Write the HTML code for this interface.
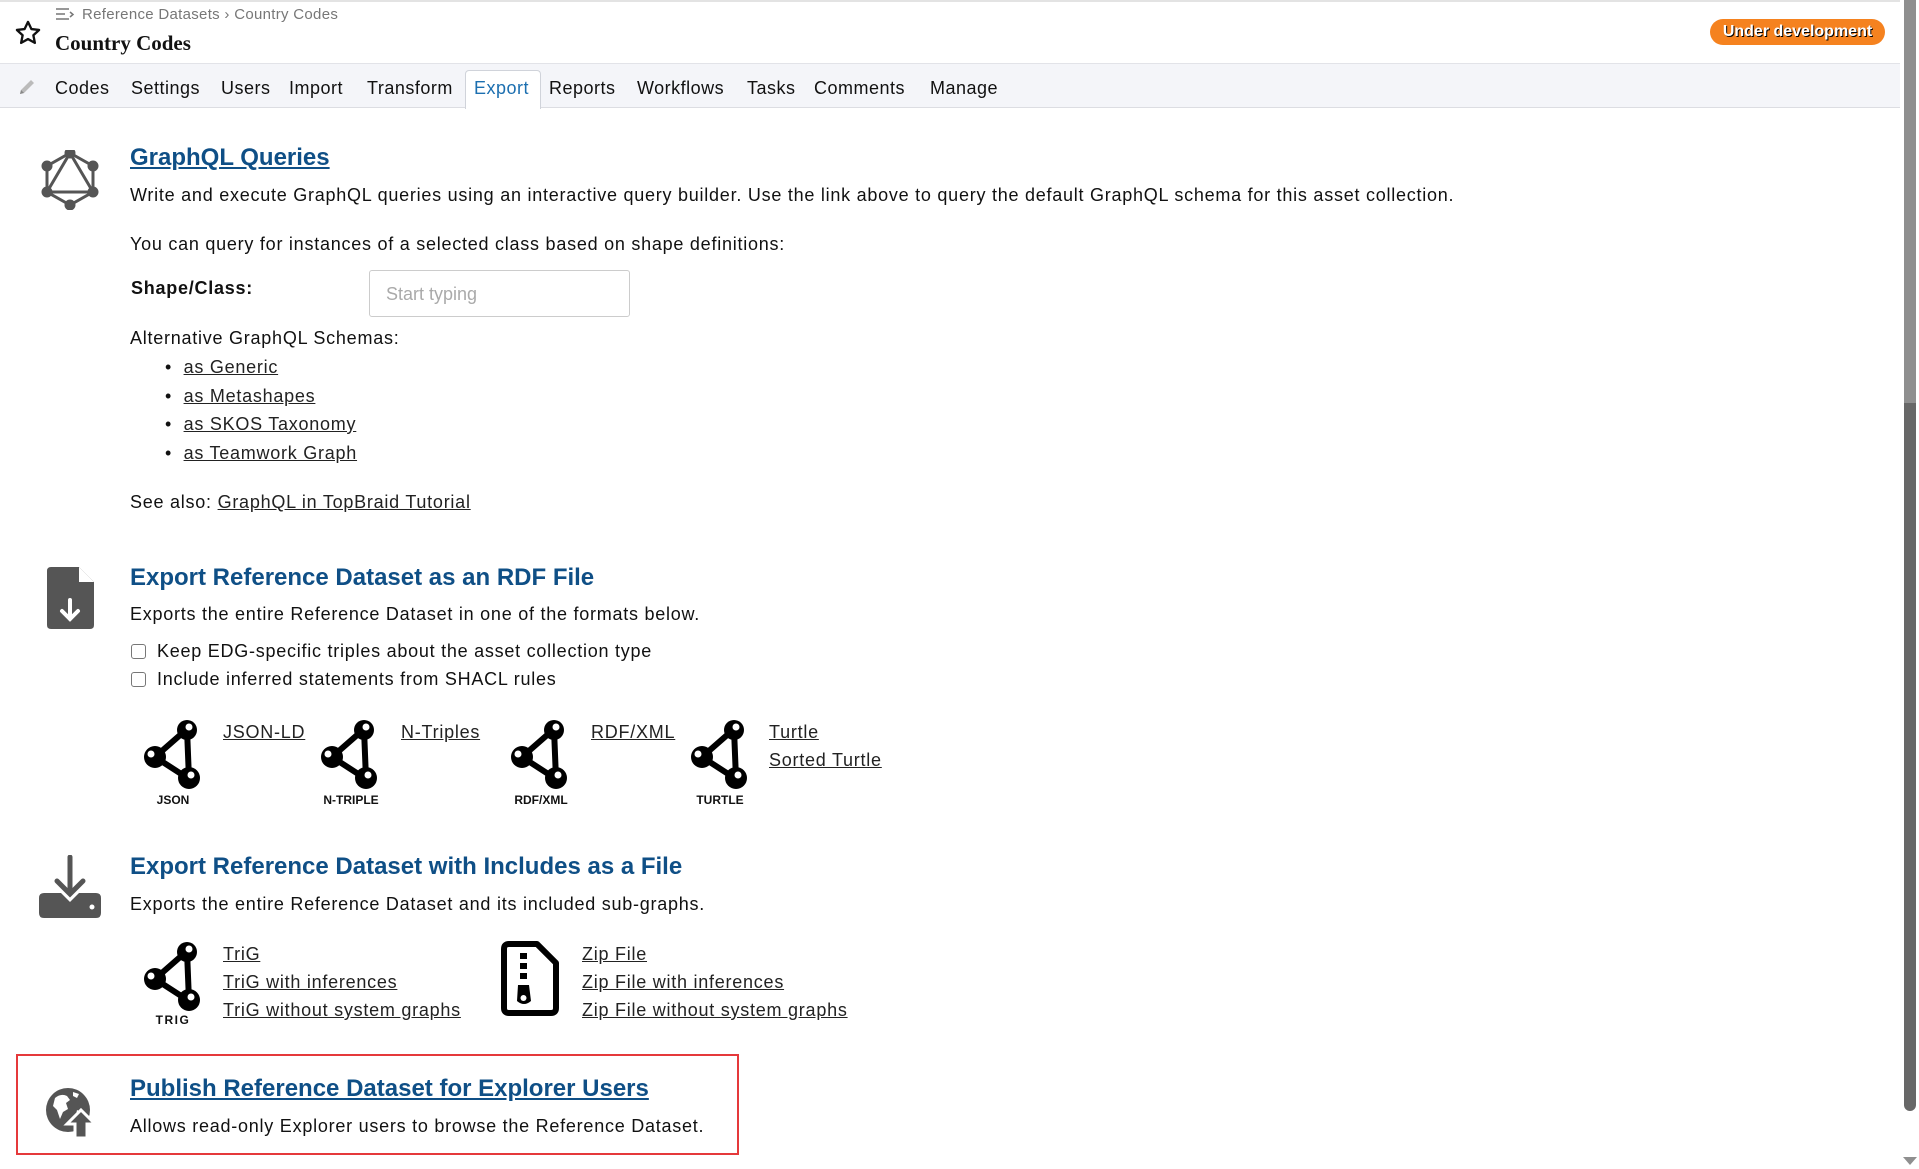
<!DOCTYPE html>
<html><head><meta charset="utf-8">
<style>
*{margin:0;padding:0;box-sizing:border-box}
body{width:1919px;height:1169px;overflow:hidden;background:#fff;font-family:"Liberation Sans",sans-serif;color:#111;position:relative}
.a{position:absolute;white-space:nowrap}
a{color:#222;text-decoration:underline}
.t{font-size:18px;line-height:22px;letter-spacing:0.75px}
.h{font-size:24px;font-weight:bold;color:#0f4f86;line-height:28px}
.tab{position:absolute;top:77px;font-size:18px;line-height:22px;color:#111;letter-spacing:0.5px}
.lbl{font-size:12px;font-weight:bold;text-align:center;width:60px}
</style></head><body>
<div class="a" style="left:0;top:0;width:1900px;height:2px;background:#e3e3e3"></div>
<svg class="a" style="left:14px;top:19px" width="28" height="28" viewBox="0 0 24 24"><path d="M12 2.5l2.9 6.1 6.6.8-4.9 4.5 1.3 6.6L12 17.2l-5.9 3.3 1.3-6.6L2.5 9.4l6.6-.8z" fill="none" stroke="#111" stroke-width="2" stroke-linejoin="round"/></svg>
<svg class="a" style="left:55px;top:7px" width="20" height="16" viewBox="0 0 20 16"><path d="M1 2h13M1 7h9M1 12h13M15 5l3 2.5-3 2.5" fill="none" stroke="#777" stroke-width="1.5"/></svg>
<div class="a" style="left:82px;top:6px;font-size:15px;color:#777;letter-spacing:0.3px">Reference Datasets › Country Codes</div>
<div class="a" style="left:55px;top:31px;font-family:'Liberation Serif',serif;font-weight:bold;font-size:21px;color:#111">Country Codes</div>
<div class="a" style="left:1710px;top:19px;width:175px;height:26px;border-radius:13px;background:#f5821f;color:#fff;font-weight:bold;font-size:16px;line-height:26px;text-align:center;text-shadow:1px 1px 0 #000">Under development</div>
<div class="a" style="left:0;top:63px;width:1900px;height:45px;background:#f4f5f9;border-top:1px solid #e2e3e8;border-bottom:1px solid #dcdde2"></div>
<svg class="a" style="left:17px;top:77px" width="20" height="20" viewBox="0 0 20 20"><path d="M3 17l1-4L14 3l3 3L7 16z" fill="#bbb"/><path d="M3 17l1-4 3 3z" fill="#888"/></svg>
<div class="a" style="left:465px;top:70px;width:76px;height:39px;background:#fff;border:1px solid #d0d3da;border-bottom:none;border-radius:4px 4px 0 0"></div>
<div class="tab" style="left:55px">Codes</div>
<div class="tab" style="left:131px">Settings</div>
<div class="tab" style="left:221px">Users</div>
<div class="tab" style="left:289px">Import</div>
<div class="tab" style="left:367px">Transform</div>
<div class="tab" style="left:474px;color:#1c6fb0">Export</div>
<div class="tab" style="left:549px">Reports</div>
<div class="tab" style="left:637px">Workflows</div>
<div class="tab" style="left:747px">Tasks</div>
<div class="tab" style="left:814px">Comments</div>
<div class="tab" style="left:930px">Manage</div>
<div class="a" style="left:1904px;top:0;width:12px;height:403px;background:#8f8f8f"></div>
<div class="a" style="left:1904px;top:403px;width:12px;height:708px;background:#676767;border-radius:0 0 6px 6px"></div>
<svg class="a" style="left:1903px;top:1157px" width="14" height="9"><path d="M0 0h14l-7 8z" fill="#8f8f8f"/></svg>
<svg class="a" style="left:40px;top:150px" width="60" height="60" viewBox="40 150 60 60" fill="#555" stroke="#555">
<g stroke-width="3" fill="none"><path d="M70 153L93 166V192L70 205L47 192V166Z"/><path d="M70 153L93 192H47Z"/></g>
<circle cx="70" cy="153" r="5"/><circle cx="93" cy="166" r="5"/><circle cx="93" cy="192" r="5"/><circle cx="70" cy="205" r="5"/><circle cx="47" cy="192" r="5"/><circle cx="47" cy="166" r="5"/></svg>
<div class="a h" style="left:130px;top:144px"><a href="#" style="color:#0f4f86">GraphQL Queries</a></div>
<div class="a t" style="left:130px;top:184px">Write and execute GraphQL queries using an interactive query builder. Use the link above to query the default GraphQL schema for this asset collection.</div>
<div class="a t" style="left:130px;top:233px">You can query for instances of a selected class based on shape definitions:</div>
<div class="a t" style="left:131px;top:277px;font-weight:bold">Shape/Class:</div>
<div class="a" style="left:369px;top:270px;width:261px;height:47px;border:1px solid #ccc;border-radius:3px;font-size:18px;color:#aaa;padding:13px 0 0 16px">Start typing</div>
<div class="a t" style="left:130px;top:327px">Alternative GraphQL Schemas:</div>
<div class="a t" style="left:165px;top:356px">•&nbsp;&nbsp;<a href="#">as Generic</a></div>
<div class="a t" style="left:165px;top:385px">•&nbsp;&nbsp;<a href="#">as Metashapes</a></div>
<div class="a t" style="left:165px;top:413px">•&nbsp;&nbsp;<a href="#">as SKOS Taxonomy</a></div>
<div class="a t" style="left:165px;top:442px">•&nbsp;&nbsp;<a href="#">as Teamwork Graph</a></div>
<div class="a t" style="left:130px;top:491px">See also: <a href="#">GraphQL in TopBraid Tutorial</a></div>
<svg class="a" style="left:47px;top:567px" width="47" height="62" viewBox="0 0 47 62"><path d="M4 0H32L47 15V58Q47 62 43 62H4Q0 62 0 58V4Q0 0 4 0Z" fill="#555"/><path d="M32 0V15H47" fill="#fff"/><path d="M23 33V52M15 44l8 8 8-8" stroke="#fff" stroke-width="4" fill="none" stroke-linecap="round"/></svg>
<div class="a h" style="left:130px;top:564px">Export Reference Dataset as an RDF File</div>
<div class="a t" style="left:130px;top:603px">Exports the entire Reference Dataset in one of the formats below.</div>
<div class="a" style="left:131px;top:644px;width:15px;height:15px;border:1px solid #777;border-radius:3px"></div>
<div class="a t" style="left:157px;top:640px">Keep EDG-specific triples about the asset collection type</div>
<div class="a" style="left:131px;top:672px;width:15px;height:15px;border:1px solid #777;border-radius:3px"></div>
<div class="a t" style="left:157px;top:668px">Include inferred statements from SHACL rules</div>
<svg width="0" height="0" style="position:absolute"><defs><g id="rdf"><path d="M44 9L12 37L46 59Z" fill="none" stroke="#000" stroke-width="6" stroke-linejoin="round"/><circle cx="44" cy="10" r="10"/><circle cx="12" cy="37" r="11"/><circle cx="46" cy="58" r="11"/><circle cx="46" cy="7" r="3.5" fill="#fff"/><circle cx="8" cy="34" r="3.5" fill="#fff"/><circle cx="48" cy="55" r="3.5" fill="#fff"/></g></defs></svg>
<svg class="a" style="left:143px;top:720px" width="60" height="72"><use href="#rdf"/></svg>
<svg class="a" style="left:320px;top:720px" width="60" height="72"><use href="#rdf"/></svg>
<svg class="a" style="left:510px;top:720px" width="60" height="72"><use href="#rdf"/></svg>
<svg class="a" style="left:690px;top:720px" width="60" height="72"><use href="#rdf"/></svg>
<div class="a lbl" style="left:143px;top:793px">JSON</div>
<div class="a lbl" style="left:321px;top:793px">N-TRIPLE</div>
<div class="a lbl" style="left:511px;top:793px">RDF/XML</div>
<div class="a lbl" style="left:690px;top:793px">TURTLE</div>
<div class="a t" style="left:223px;top:721px"><a href="#">JSON-LD</a></div>
<div class="a t" style="left:401px;top:721px"><a href="#">N-Triples</a></div>
<div class="a t" style="left:591px;top:721px"><a href="#">RDF/XML</a></div>
<div class="a t" style="left:769px;top:721px"><a href="#">Turtle</a></div>
<div class="a t" style="left:769px;top:749px"><a href="#">Sorted Turtle</a></div>
<svg class="a" style="left:39px;top:855px" width="62" height="63" viewBox="0 0 62 63"><path d="M31 2V38M18 26l13 13 13-13" stroke="#555" stroke-width="5" fill="none" stroke-linecap="round"/><path d="M5 38H22L31 47L40 38H57Q62 38 62 43V58Q62 63 57 63H5Q0 63 0 58V43Q0 38 5 38Z" fill="#555"/><circle cx="53" cy="52" r="2.5" fill="#fff"/></svg>
<div class="a h" style="left:130px;top:853px">Export Reference Dataset with Includes as a File</div>
<div class="a t" style="left:130px;top:893px">Exports the entire Reference Dataset and its included sub-graphs.</div>
<svg class="a" style="left:143px;top:942px" width="60" height="72"><use href="#rdf"/></svg>
<div class="a lbl" style="left:143px;top:1013px;letter-spacing:1.5px">TRIG</div>
<div class="a t" style="left:223px;top:943px"><a href="#">TriG</a></div>
<div class="a t" style="left:223px;top:971px"><a href="#">TriG with inferences</a></div>
<div class="a t" style="left:223px;top:999px"><a href="#">TriG without system graphs</a></div>
<svg class="a" style="left:501px;top:941px" width="58" height="75" viewBox="0 0 58 75"><path d="M8 3H36L55 22V67Q55 72 50 72H8Q3 72 3 67V8Q3 3 8 3Z" fill="none" stroke="#000" stroke-width="6" stroke-linejoin="round"/><rect x="19" y="12" width="7" height="6"/><rect x="19" y="22" width="7" height="6"/><rect x="19" y="32" width="7" height="6"/><path d="M17 44H28L30 60Q23 66 16 60Z"/><ellipse cx="22.5" cy="57" rx="3" ry="3" fill="#fff"/></svg>
<div class="a t" style="left:582px;top:943px"><a href="#">Zip File</a></div>
<div class="a t" style="left:582px;top:971px"><a href="#">Zip File with inferences</a></div>
<div class="a t" style="left:582px;top:999px"><a href="#">Zip File without system graphs</a></div>
<div class="a" style="left:16px;top:1054px;width:723px;height:101px;border:2px solid #e5393b"></div>
<svg class="a" style="left:43px;top:1084px" width="56" height="56" viewBox="0 0 56 56"><circle cx="25" cy="26" r="22" fill="#555"/><path d="M12 14q6-5 12-2l3 4-4 3 2 6-5 3-3 7-3-9-4-4z M30 8l6 2-2 4-4-2z M34 26l6 3 2 6-3 4-4-3-2-5z" fill="#fff"/><path d="M38 26L52 40H44V54H32V40H24Z" fill="#555" stroke="#fff" stroke-width="3"/></svg>
<div class="a h" style="left:130px;top:1075px"><a href="#" style="color:#0f4f86">Publish Reference Dataset for Explorer Users</a></div>
<div class="a t" style="left:130px;top:1115px">Allows read-only Explorer users to browse the Reference Dataset.</div>
</body></html>
